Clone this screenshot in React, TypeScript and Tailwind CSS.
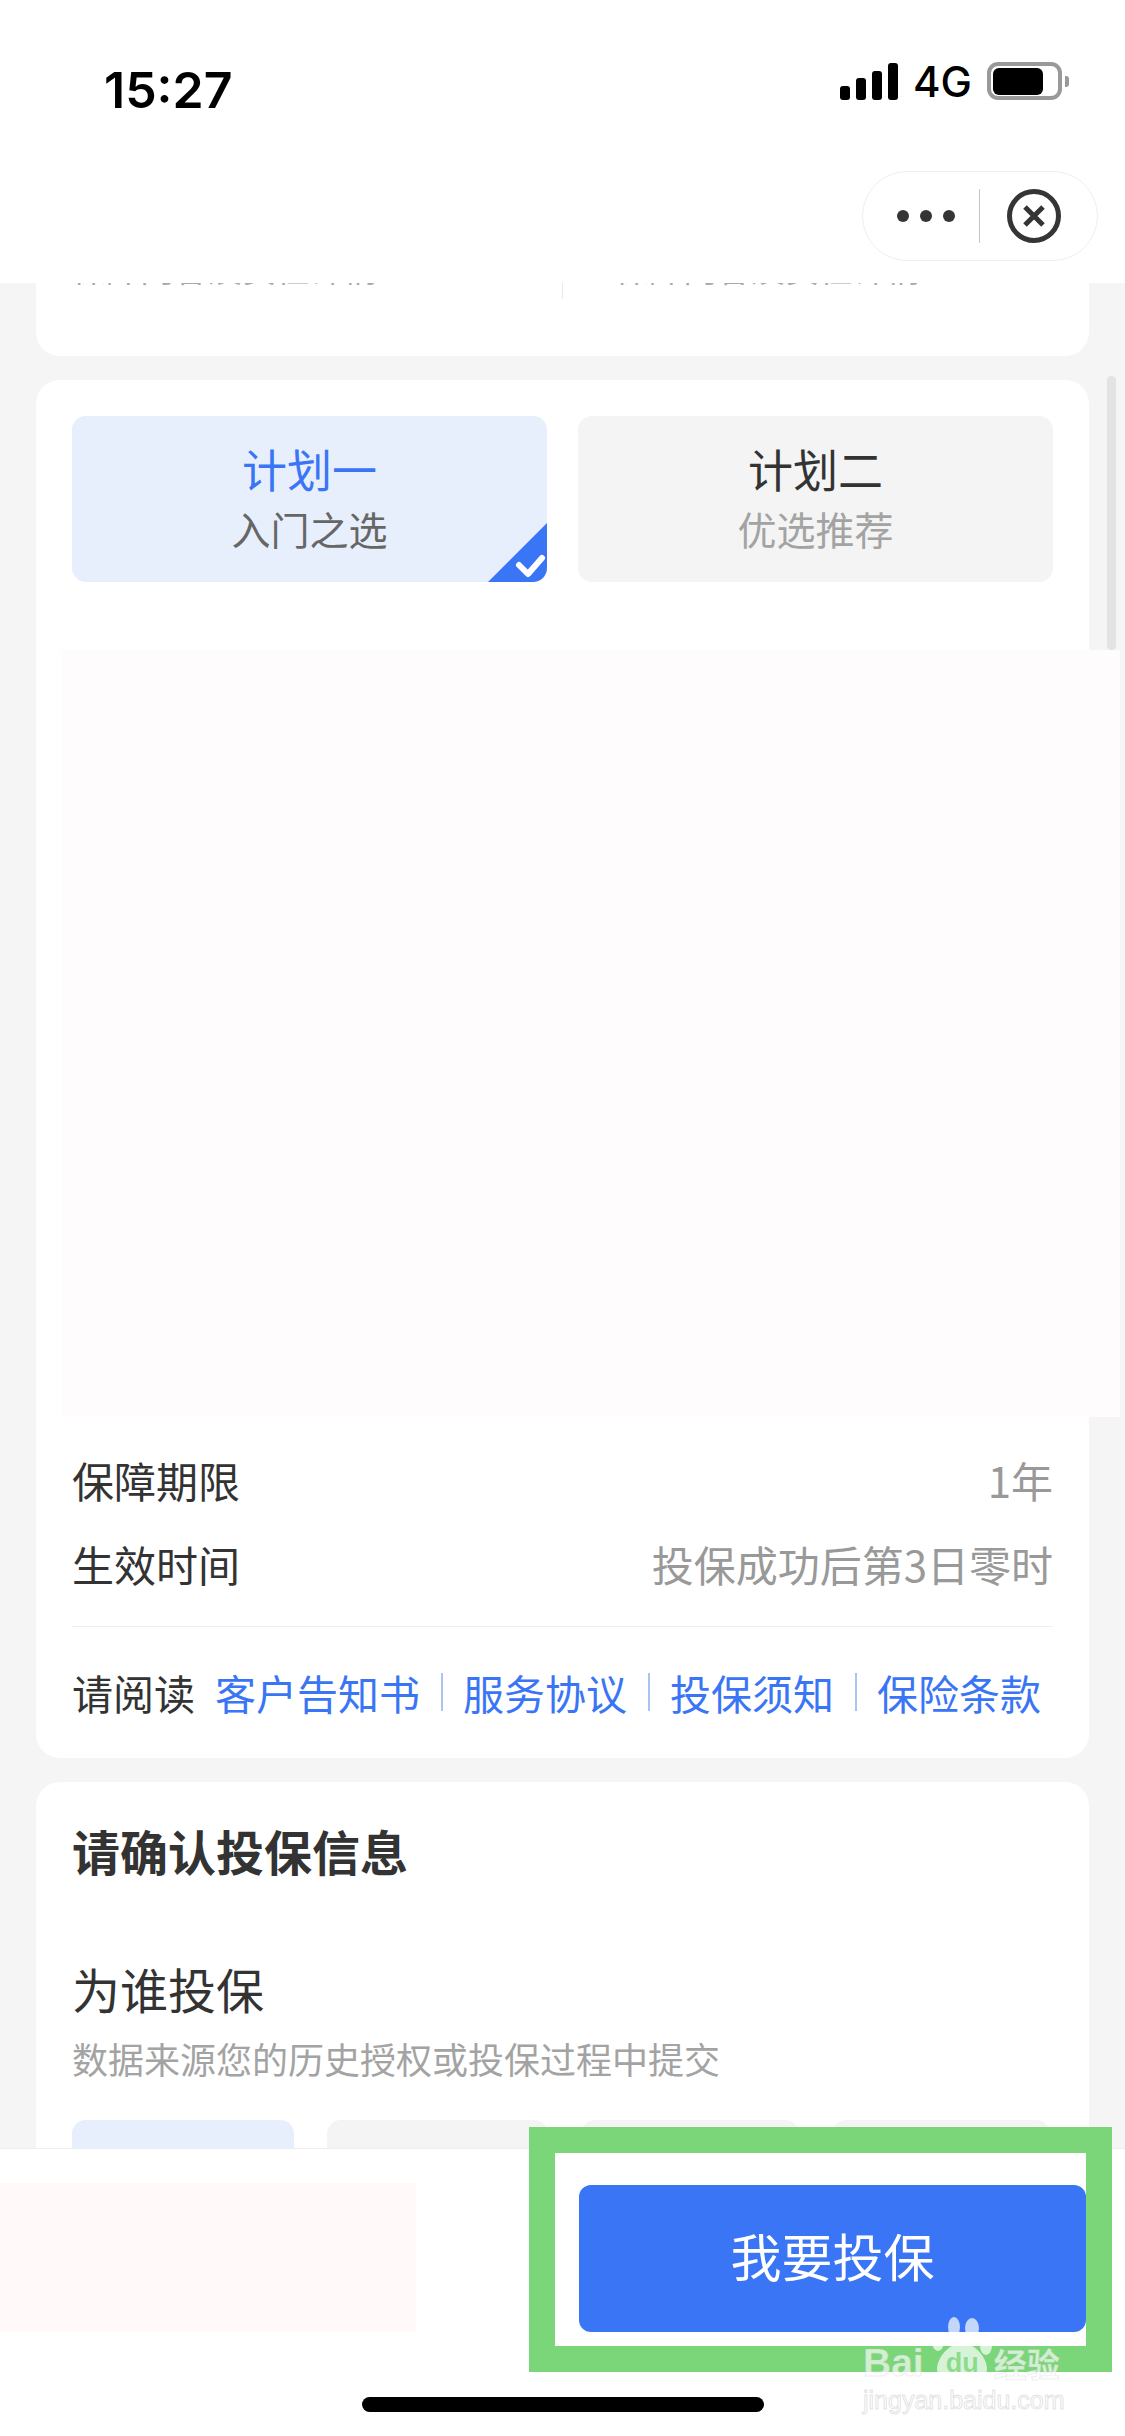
const plans = [
  { name: '计划一', desc: '入门之选', active: true },
  { name: '计划二', desc: '优选推荐', active: false },
];

const docs = ['客户告知书', '服务协议', '投保须知', '保险条款'];

function StatusBar() {
  return (
    <div className="flex h-[171px] items-start justify-between pl-[104px] pr-[56px] pt-[60px]">
      <span className="text-[50px] leading-[60px] font-semibold text-black font-['Inter',sans-serif]">15:27</span>
      <div className="flex items-center pt-[2px]">
        <div className="flex h-[37px] items-end gap-[6px]">
          <span className="h-[14px] w-[10px] rounded-[3px] bg-black" />
          <span className="h-[22px] w-[10px] rounded-[3px] bg-black" />
          <span className="h-[29px] w-[10px] rounded-[3px] bg-black" />
          <span className="h-[37px] w-[10px] rounded-[3px] bg-black" />
        </div>
        <span className="ml-[15px] text-[42px] leading-[37px] font-medium text-black font-['Inter',sans-serif]">4G</span>
        <div className="ml-[15px] flex h-[38px] w-[75px] items-center rounded-[11px] border-[4px] border-[#999999] pl-[2px]">
          <span className="h-[27px] w-[50px] rounded-[6px] bg-black" />
        </div>
        <span className="ml-[3px] h-[11px] w-[4px] rounded-r-[3px] bg-[#999999]" />
      </div>
    </div>
  );
}

function Capsule() {
  return (
    <div className="flex justify-end pr-[27px]">
      <div className="flex h-[90px] w-[236px] items-center rounded-full border border-[#eeeeee] bg-white">
        <div className="flex w-[116px] justify-end gap-[11px] pr-[24px]">
          <span className="size-[12px] rounded-full bg-[#353535]" />
          <span className="size-[12px] rounded-full bg-[#353535]" />
          <span className="size-[12px] rounded-full bg-[#353535]" />
        </div>
        <span className="h-[54px] w-px bg-[#c4c4c4]" />
        <svg className="ml-[27px]" width="54" height="54" viewBox="0 0 54 54" fill="none" stroke="#353535">
          <circle cx="27" cy="27" r="24.5" strokeWidth="5" />
          <path d="M18 18 36 36M36 18 18 36" strokeWidth="5" />
        </svg>
      </div>
    </div>
  );
}

function PlanTile({ name, desc, active }: { name: string; desc: string; active: boolean }) {
  return (
    <div
      className={
        active
          ? 'relative flex h-[166px] flex-1 flex-col items-center overflow-hidden rounded-[14px] bg-[#e7effc] pt-[25px]'
          : 'relative flex h-[166px] flex-1 flex-col items-center overflow-hidden rounded-[14px] bg-[#f4f4f4] pt-[25px]'
      }
    >
      <span className={active ? 'text-[45px] leading-[56px] text-[#3a75f6]' : 'text-[45px] leading-[56px] text-[#333333]'}>{name}</span>
      <span className={active ? 'mt-[6px] text-[39px] leading-[50px] text-[#666666]' : 'mt-[6px] text-[39px] leading-[50px] text-[#a3a3a3]'}>{desc}</span>
      {active && (
        <svg className="absolute right-0 bottom-0" width="59" height="59" viewBox="0 0 59 59">
          <path d="M59 0V59H0Z" fill="#3a75f6" />
          <path d="M31 42 40 51 54 35" fill="none" stroke="#ffffff" strokeWidth="6" strokeLinecap="round" strokeLinejoin="round" />
        </svg>
      )}
    </div>
  );
}

function Watermark() {
  return (
    <div className="absolute top-[2317px] left-[863px] z-30 flex w-[202px] flex-col">
      <svg className="absolute top-0 left-[67px]" width="64" height="62" viewBox="0 0 64 62">
        <g fill="#ffffff" fillOpacity="0.7">
          <ellipse cx="24" cy="10" rx="6" ry="10" />
          <ellipse cx="42" cy="11" rx="7" ry="10" />
          <ellipse cx="8" cy="25" rx="6" ry="9" />
          <ellipse cx="56" cy="29" rx="6" ry="9" />
          <path d="M32 26c12 0 25 14 25 26 0 6-5 10-11 10H18c-6 0-11-4-11-10 0-12 13-26 25-26Z" />
        </g>
      </svg>
      <div className="relative mt-[28px] flex h-[36px] items-center whitespace-nowrap text-[39px] leading-[36px] font-bold text-white/65 [-webkit-text-stroke:1px_rgba(190,190,190,0.25)] font-['Liberation_Sans',sans-serif]">
        <span>Bai</span>
        <span className="ml-[22px] text-[27px] text-[#7bd579]/80 [-webkit-text-stroke:0]">du</span>
        <span className="ml-[15px] text-[33px] font-['Noto_Sans_CJK_SC',sans-serif]">经验</span>
      </div>
      <span className="mt-[6px] whitespace-nowrap text-[25px] leading-[26px] text-white [-webkit-text-stroke:1px_rgba(170,170,170,0.35)] font-['Liberation_Sans',sans-serif]">
        jingyan.baidu.com
      </span>
    </div>
  );
}

export default function App() {
  return (
    <div className="relative flex h-[2436px] w-[1125px] flex-col overflow-hidden bg-[#f5f5f5] font-['Noto_Sans_CJK_SC',sans-serif]">
      <header className="relative z-10 h-[283px] shrink-0 bg-white">
        <StatusBar />
        <Capsule />
      </header>

      <main className="relative min-h-0 flex-1 overflow-hidden px-[36px]">
        <section className="flex h-[73px] rounded-b-[24px] bg-white px-[36px]">
          <div className="-mt-[39px] flex h-[55px] w-full">
            <span className="w-[490px] whitespace-nowrap text-[34px] leading-[48px] text-[#aaaaaa]">保障内容及责任详情</span>
            <span className="w-px bg-[#e8e8e8]" />
            <span className="whitespace-nowrap pl-[52px] text-[34px] leading-[48px] text-[#aaaaaa]">保障内容及责任详情</span>
          </div>
        </section>

        <section className="mt-[24px] rounded-[24px] bg-white px-[36px] pt-[36px] pb-[38px]">
          <div className="flex gap-[31px]">
            {plans.map((plan) => (
              <PlanTile key={plan.name} {...plan} />
            ))}
          </div>

          <div className="mt-[68px] -ml-[11px] h-[767px] w-[1059px] bg-[#fefcfc]" />

          <div className="mt-[35px] flex items-center justify-between text-[42px] leading-[56px]">
            <span className="text-[#333333]">保障期限</span>
            <span className="text-[#999999]">1年</span>
          </div>
          <div className="mt-[28px] flex items-center justify-between text-[42px] leading-[56px]">
            <span className="text-[#333333]">生效时间</span>
            <span className="text-[#999999]">投保成功后第3日零时</span>
          </div>

          <div className="mt-[34px] flex items-center whitespace-nowrap border-t border-[#eeeeee] pt-[37px] text-[41px] leading-[56px]">
            <span className="mr-[20px] text-[#333333]">请阅读</span>
            {docs.map((doc, i) => (
              <span key={doc} className="flex items-center text-[#3a75f6]">
                {i > 0 && <span className="mx-[20.5px] h-[38px] w-[2px] bg-[#a9c3f3]" />}
                {doc}
              </span>
            ))}
          </div>
        </section>

        <section className="mt-[24px] rounded-t-[24px] bg-white px-[36px] pt-[35px]">
          <h2 className="text-[48px] leading-[66px] font-bold text-[#333333]">请确认投保信息</h2>
          <p className="mt-[73px] text-[48px] leading-[64px] text-[#333333]">为谁投保</p>
          <p className="mt-[14px] text-[36px] leading-[48px] text-[#a3a3a3]">数据来源您的历史授权或投保过程中提交</p>
          <div className="mt-[38px] flex justify-between pr-[3px]">
            <span className="h-[60px] w-[222px] rounded-[14px] bg-[#e7effc]" />
            <span className="h-[60px] w-[221px] rounded-[14px] bg-[#f4f4f4]" />
            <span className="h-[60px] w-[218px] rounded-[14px] bg-[#f4f4f4]" />
            <span className="h-[60px] w-[218px] rounded-[14px] bg-[#f4f4f4]" />
          </div>
        </section>

        {/* scrollbar */}
        <span className="absolute top-[93px] right-[9px] h-[274px] w-[9px] rounded-full bg-[#e3e3e3]" />
      </main>

      <footer className="relative z-10 flex h-[288px] shrink-0 flex-col border-t border-[#eeeeee] bg-white">
        <div className="mt-[34px] flex h-[149px] items-stretch justify-between pr-[39px]">
          <div className="w-[416px] bg-[#fff9f9]" />
          <button className="flex h-[147px] w-[507px] items-center justify-center self-end rounded-[12px] bg-[#3a75f6] pb-[6px] text-[51px] text-white">
            我要投保
          </button>
        </div>
        <div className="mt-[65px] flex justify-center">
          <span className="h-[15px] w-[402px] rounded-full bg-black" />
        </div>
      </footer>

      {/* green annotation frame around the button */}
      <div className="absolute top-[2127px] left-[529px] z-20 h-[245px] w-[583px] border-[26px] border-[#7bd579]" />
      <Watermark />
    </div>
  );
}
